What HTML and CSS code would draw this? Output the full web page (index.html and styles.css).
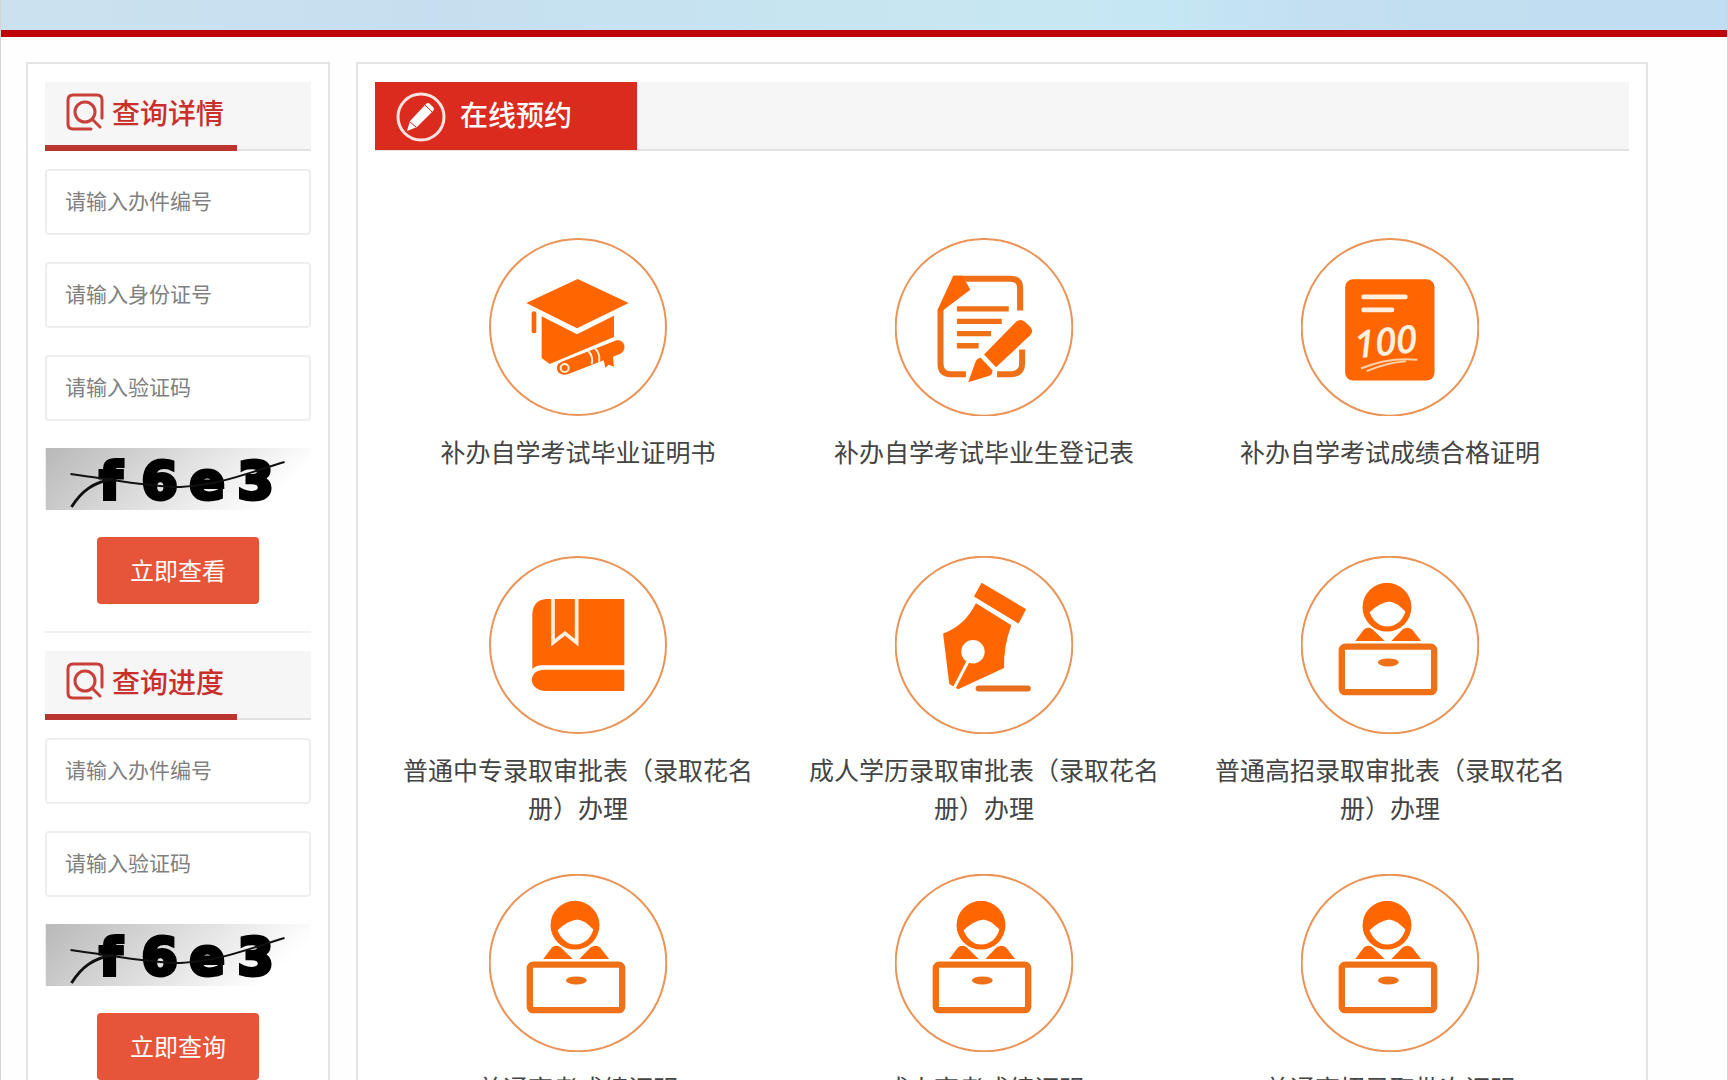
FILE: index.html
```html
<!DOCTYPE html>
<html lang="zh-CN">
<head>
<meta charset="utf-8">
<title>在线预约</title>
<link rel="stylesheet" href="styles.css">
</head>
<body>
<svg class="defs" aria-hidden="true">
  <defs>
    <linearGradient id="shade" x1="0" y1="0" x2="1" y2="0.25">
      <stop offset="0" stop-color="#b8b8b8"/>
      <stop offset="0.5" stop-color="#dcdcdc"/>
      <stop offset="1" stop-color="#ffffff"/>
    </linearGradient>
    <symbol id="search" viewBox="0 0 38 38">
      <g fill="none" stroke="#c9403a" stroke-width="3" stroke-linecap="round">
        <path d="M25 36H7Q2 36 2 31V7Q2 2 7 2H31Q36 2 36 7V25"/>
        <circle cx="19" cy="19" r="10"/>
        <path d="M26 26L34 34"/>
      </g>
    </symbol>
    <symbol id="captcha" viewBox="0 0 265 62">
      <rect width="265" height="62" fill="url(#shade)"/>
      <text class="code" x="54 96 144 192" y="51 51 51 51">f6e3</text>
      <path d="M25 26C70 32 105 39 135 39C175 37 205 24 239 14" fill="none" stroke="#111" stroke-width="2"/>
      <path d="M26 59C36 43 48 34 68 31" fill="none" stroke="#111" stroke-width="3"/>
    </symbol>
    <symbol id="clerk" viewBox="66 48 532 532">
      <circle class="ring" cx="332" cy="314" r="264"/>
      <circle cx="323" cy="201" r="73" fill="#f60"/>
      <path d="M271 216Q300 188 330 184Q352 186 378 214C370 242 350 258 323 259C298 258 280 240 271 216Z" fill="#fff"/>
      <path d="M228 302L254 268Q265 258 280 267L316 302ZM336 302L370 267Q385 257 398 268L425 302Z" fill="#f60"/>
      <rect x="188" y="319" width="276" height="136" rx="10" fill="none" stroke="#f07018" stroke-width="19"/>
      <ellipse cx="327" cy="366" rx="31" ry="12" fill="#f07018"/>
    </symbol>
  </defs>
</svg>

<div class="page">
  <header class="banner"></header>
  <div class="columns">
    <aside class="panel side">
      <form class="query">
        <h2 class="side-title"><svg class="search-icon" aria-hidden="true"><use href="#search"/></svg>查询详情</h2>
        <div class="fields">
          <input class="field" type="text" placeholder="请输入办件编号" aria-label="办件编号">
          <input class="field" type="text" placeholder="请输入身份证号" aria-label="身份证号">
          <input class="field" type="text" placeholder="请输入验证码" aria-label="验证码">
          <svg class="captcha" viewBox="0 0 265 62" role="img" aria-label="验证码图片"><use href="#captcha"/></svg>
          <button class="submit" type="button">立即查看</button>
        </div>
      </form>
      <form class="query">
        <h2 class="side-title"><svg class="search-icon" aria-hidden="true"><use href="#search"/></svg>查询进度</h2>
        <div class="fields">
          <input class="field" type="text" placeholder="请输入办件编号" aria-label="办件编号">
          <input class="field" type="text" placeholder="请输入验证码" aria-label="验证码">
          <svg class="captcha" viewBox="0 0 265 62" role="img" aria-label="验证码图片"><use href="#captcha"/></svg>
          <button class="submit" type="button">立即查询</button>
        </div>
      </form>
    </aside>

    <main class="panel main">
      <div class="main-head">
        <h1 class="main-title">
          <svg class="pencil-icon" viewBox="0 0 50 50" aria-hidden="true">
            <circle cx="25" cy="25" r="23" fill="none" stroke="#fde3e0" stroke-width="3"/>
            <path d="M11 39L14 29L30 12Q32 10 34 12L37 15Q39 17 37 19L21 35Z" fill="#fff"/>
            <path d="M14 30L20 35M29 13L36 20" stroke="#db2b1f" stroke-width="1"/>
          </svg>
          <span class="main-title-text">在线预约</span>
        </h1>
      </div>
      <nav class="services">
        <a class="service" href="#">
          <svg class="service-icon" viewBox="58 55 534 534" aria-hidden="true">
            <circle class="ring" cx="325" cy="322" r="264"/>
            <g fill="#f60">
              <path d="M170 250L324 178L477 250L322 326Z"/>
              <rect x="186" y="275" width="14" height="66" rx="6"/>
              <path d="M216 290L322 344L433 288V352L240 433L216 415Z"/>
              <path d="M276 426L437 363C466 355 474 392 452 402L430 411L433 441L417 435L407 444L402 422L294 464C262 472 250 436 276 426Z"/>
            </g>
            <g fill="none" stroke="#fff0e0" stroke-width="6">
              <circle cx="285" cy="445" r="12"/>
              <path d="M356 394Q372 412 366 434M376 386Q393 403 388 426"/>
            </g>
          </svg>
          <span class="service-name">补办自学考试毕业证明书</span>
        </a>
        <a class="service" href="#">
          <svg class="service-icon" viewBox="48 55 532 532" aria-hidden="true">
            <circle class="ring" cx="314" cy="322" r="264"/>
            <g fill="none" stroke="#f07018" stroke-width="18">
              <path d="M224 177H394Q422 177 422 205V272"/>
              <path d="M184 268V430Q184 462 214 462H260"/>
              <path d="M353 462H396Q428 460 428 430V388"/>
              <path d="M233 267H388M233 304H367M233 341H335M233 377H298" stroke-width="16"/>
            </g>
            <g fill="#f60">
              <path d="M222 168H250L273 210L177 282V266Z"/>
              <path d="M314 403L410 305Q423 294 437 306L452 320Q464 334 452 346L350 441Z"/>
              <path d="M304 413Q292 415 288 426L267 486L330 467Q340 462 339 450Z"/>
            </g>
          </svg>
          <span class="service-name">补办自学考试毕业生登记表</span>
        </a>
        <a class="service" href="#">
          <svg class="service-icon" viewBox="66 55 532 532" aria-hidden="true">
            <circle class="ring" cx="332" cy="322" r="264"/>
            <rect x="198" y="178" width="267" height="303" rx="24" fill="#f60"/>
            <path d="M253 231H378M253 270H338" stroke="#fff0e0" stroke-width="14" stroke-linecap="round"/>
            <text class="score" x="229" y="415" transform="rotate(-6 229 415)">100</text>
            <path d="M245 445Q330 410 414 419M262 453Q320 427 380 423" fill="none" stroke="#ffd0a8" stroke-width="6"/>
          </svg>
          <span class="service-name">补办自学考试成绩合格证明</span>
        </a>
        <a class="service" href="#">
          <svg class="service-icon" viewBox="58 48 534 534" aria-hidden="true">
            <circle class="ring" cx="325" cy="315" r="264"/>
            <path d="M230 177H464V376H215Q200 376 188 387V222Q190 180 230 177Z" fill="#f60"/>
            <path d="M464 389V453H228C174 450 174 392 220 389Z" fill="#f60"/>
            <path d="M250 177V308L286 280L321 308V177" fill="none" stroke="#fff0e0" stroke-width="11"/>
          </svg>
          <span class="service-name">普通中专录取审批表（录取花名册）办理</span>
        </a>
        <a class="service" href="#">
          <svg class="service-icon" viewBox="47 48 532 532" aria-hidden="true">
            <circle class="ring" cx="313" cy="314" r="264"/>
            <g fill="#f60" stroke="#f60" stroke-width="6" stroke-linejoin="round">
              <path d="M307 132L435 208L415 246L287 168Z"/>
              <path d="M290 193L391 256Q368 320 370 381L236 443L212 429L194 282Q258 258 290 193Z"/>
            </g>
            <circle cx="280" cy="334" r="35" fill="#fff"/>
            <path d="M266 362L222 446" stroke="#fff" stroke-width="9"/>
            <path d="M297 444H444" stroke="#e6701f" stroke-width="18" stroke-linecap="round"/>
          </svg>
          <span class="service-name">成人学历录取审批表（录取花名册）办理</span>
        </a>
        <a class="service" href="#">
          <svg class="service-icon" aria-hidden="true"><use href="#clerk"/></svg>
          <span class="service-name">普通高招录取审批表（录取花名册）办理</span>
        </a>
        <a class="service" href="#">
          <svg class="service-icon" aria-hidden="true"><use href="#clerk"/></svg>
          <span class="service-name">普通高考成绩证明</span>
        </a>
        <a class="service" href="#">
          <svg class="service-icon" aria-hidden="true"><use href="#clerk"/></svg>
          <span class="service-name">成人高考成绩证明</span>
        </a>
        <a class="service" href="#">
          <svg class="service-icon" aria-hidden="true"><use href="#clerk"/></svg>
          <span class="service-name">普通高招录取批次证明</span>
        </a>
      </nav>
    </main>
  </div>
</div>
</body>
</html>
```
FILE: styles.css
```css
* {
  box-sizing: border-box;
}

body {
  margin: 0;
  background: #fefefe;
  color: #444;
  font-family: "Noto Sans CJK SC", "Noto Sans", sans-serif;
}

.defs {
  display: block;
  width: 0;
  height: 0;
}

.page {
  border: solid #d4d4d4;
  border-width: 0 1px;
}

.banner {
  height: 37px;
  border-bottom: 7px solid #be060a;
  background: linear-gradient(90deg, #cbe1ef 0%, #c6dff0 25%, #c7e7f2 60%, #c5e6f4 68%, #c3dff0 76%, #c0ddf2 100%);
}

.columns {
  display: flex;
  gap: 26px;
  padding: 25px 79px 27px 25px;
}

.panel {
  padding: 18px 17px;
  border: 2px solid #e4e4e4;
  background: #fff;
}

.side {
  flex: 0 0 304px;
}

.main {
  flex: 1;
  min-width: 0;
}

.query + .query {
  margin-top: 27px;
  padding-top: 18px;
  border-top: 2px solid #f0f0f0;
}

.side-title {
  position: relative;
  display: flex;
  align-items: center;
  gap: 8px;
  height: 69px;
  margin: 0 0 18px;
  padding: 0 21px 8px;
  border-bottom: 2px solid #e2e2e2;
  background: #f6f6f6;
  color: #c9302c;
  font-size: 28px;
  font-weight: 500;
  line-height: 40px;
}

.side-title::after {
  content: "";
  position: absolute;
  left: 0;
  bottom: -2px;
  width: 72%;
  height: 6px;
  background: #b9352e;
}

.search-icon {
  width: 38px;
  height: 38px;
}

.fields {
  display: flex;
  flex-direction: column;
  align-items: center;
  gap: 27px;
}

.field {
  width: 100%;
  height: 66px;
  padding: 0 18px 4px;
  border: 2px solid #eee;
  border-radius: 4px;
  background: #fff;
  color: #444;
  font: 21px/30px "Noto Sans CJK SC", sans-serif;
}

.field::placeholder {
  color: #808080;
}

.captcha {
  width: 100%;
  height: 62px;
}

.code {
  fill: #000;
  stroke: #000;
  stroke-width: 4px;
  font: bold 52px "DejaVu Sans", sans-serif;
}

.submit {
  width: 162px;
  height: 67px;
  padding: 0 0 2px;
  border: 0;
  border-radius: 4px;
  background: #e6553a;
  color: #fff;
  font: 24px/36px "Noto Sans CJK SC", sans-serif;
}

.main-head {
  height: 69px;
  border-bottom: 2px solid #e2e2e2;
  background: #f6f6f6;
}

.main-title {
  display: flex;
  align-items: center;
  gap: 14px;
  width: 262px;
  height: 68px;
  margin: 0;
  padding: 2px 21px 0;
  background: #db2b1f;
  color: #fff;
  font-size: 28px;
  font-weight: 500;
  line-height: 40px;
}

.main-title-text {
  padding-bottom: 6px;
}

.pencil-icon {
  width: 50px;
  height: 50px;
}

.services {
  display: grid;
  grid-template-columns: repeat(3, 1fr);
  grid-auto-rows: minmax(272px, auto);
  row-gap: 46px;
  padding: 87px 36px 0 0;
}

.service {
  display: flex;
  flex-direction: column;
  align-items: center;
  gap: 16px;
  padding: 0 20px;
  color: #444;
  text-align: center;
  text-decoration: none;
}

.service-icon {
  flex: none;
  width: 178px;
  height: 178px;
}

.service-name {
  font-size: 25px;
  line-height: 38px;
}

.ring {
  fill: none;
  stroke: #ea9458;
  stroke-width: 6px;
}

.score {
  fill: #fff0e0;
  font: italic 600 114px "Open Sans", sans-serif;
}
```
